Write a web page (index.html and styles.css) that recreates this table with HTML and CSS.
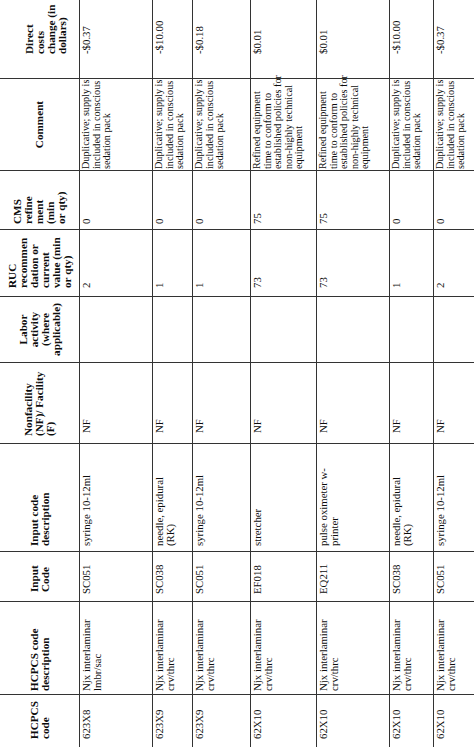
FILE: index.html
```html
<!DOCTYPE html>
<html lang="en">
<head>
<meta charset="utf-8">
<title>Direct cost refinements</title>
<link rel="stylesheet" href="styles.css">
</head>
<body>
<div class="sheet">
<table class="grid">
<colgroup>
<col class="c1"><col class="c2"><col class="c3"><col class="c4"><col class="c5">
<col class="c6"><col class="c7"><col class="c8"><col class="c9"><col class="c10">
</colgroup>
<thead>
<tr class="rh">
<th>HCPCS<br>code</th>
<th>HCPCS code<br>description</th>
<th>Input<br>Code</th>
<th>Input code<br>description</th>
<th>Nonfacility<br>(NF)/ Facility<br>(F)</th>
<th>Labor<br>activity<br>(where<br>applicable)</th>
<th>RUC<br>recommen<br>dation or<br>current<br>value (min<br>or qty)</th>
<th>CMS<br>refine<br>ment<br>(min<br>or qty)</th>
<th>Comment</th>
<th>Direct<br>costs<br>change (in<br>dollars)</th>
</tr>
</thead>
<tbody>
<tr class="r1">
<td>623X8</td><td>Njx interlaminar<br>lmbr/sac</td><td>SC051</td><td>syringe 10-12ml</td><td>NF</td><td></td><td>2</td><td>0</td>
<td>Duplicative; supply is<br>included in conscious<br>sedation pack</td><td>-$0.37</td>
</tr>
<tr class="r2">
<td>623X9</td><td>Njx interlaminar<br>crv/thrc</td><td>SC038</td><td>needle, epidural<br>(RK)</td><td>NF</td><td></td><td>1</td><td>0</td>
<td>Duplicative; supply is<br>included in conscious<br>sedation pack</td><td>-$10.00</td>
</tr>
<tr class="r3">
<td>623X9</td><td>Njx interlaminar<br>crv/thrc</td><td>SC051</td><td>syringe 10-12ml</td><td>NF</td><td></td><td>1</td><td>0</td>
<td>Duplicative; supply is<br>included in conscious<br>sedation pack</td><td>-$0.18</td>
</tr>
<tr class="r4">
<td>62X10</td><td>Njx interlaminar<br>crv/thrc</td><td>EF018</td><td>stretcher</td><td>NF</td><td></td><td>73</td><td>75</td>
<td>Refined equipment<br>time to conform to<br>established policies for<br>non-highly technical<br>equipment</td><td>$0.01</td>
</tr>
<tr class="r5">
<td>62X10</td><td>Njx interlaminar<br>crv/thrc</td><td>EQ211</td><td>pulse oximeter w-<br>printer</td><td>NF</td><td></td><td>73</td><td>75</td>
<td>Refined equipment<br>time to conform to<br>established policies for<br>non-highly technical<br>equipment</td><td>$0.01</td>
</tr>
<tr class="r6">
<td>62X10</td><td>Njx interlaminar<br>crv/thrc</td><td>SC038</td><td>needle, epidural<br>(RK)</td><td>NF</td><td></td><td>1</td><td>0</td>
<td>Duplicative; supply is<br>included in conscious<br>sedation pack</td><td>-$10.00</td>
</tr>
<tr class="r7">
<td>62X10</td><td>Njx interlaminar<br>crv/thrc</td><td>SC051</td><td>syringe 10-12ml</td><td>NF</td><td></td><td>2</td><td>0</td>
<td>Duplicative; supply is<br>included in conscious<br>sedation pack</td><td>-$0.37</td>
</tr>
</tbody>
</table>
</div>
</body>
</html>
```
FILE: styles.css
```css
* { box-sizing: border-box; }
html, body { margin: 0; padding: 0; background: #fff; }
body { width: 474px; height: 747px; overflow: hidden; }

.sheet {
  width: 762px;
  transform-origin: 0 0;
  transform: translate(-1px, 749px) rotate(-90deg);
}

.grid {
  border-collapse: collapse;
  table-layout: fixed;
  width: 762px;
  font-family: "Liberation Serif", "Times New Roman", serif;
  color: #0d0d0d;
}

.c1 { width: 54px; }
.c2 { width: 93px; }
.c3 { width: 50px; }
.c4 { width: 108px; }
.c5 { width: 81px; }
.c6 { width: 66px; }
.c7 { width: 67px; }
.c8 { width: 59px; }
.c9 { width: 92px; }
.c10 { width: 92px; }

.grid th, .grid td {
  border: 1px solid #333;
  padding: 1px 0 0 4px;
  white-space: nowrap;
  overflow: visible;
  text-align: left;
  vertical-align: top;
}

.grid td {
  font-size: 10.8px;
  line-height: 10.5px;
}

.grid th {
  font-weight: bold;
  font-size: 11.2px;
  line-height: 11px;
  vertical-align: middle;
  padding-top: 0;
}

.rh { height: 80px; }
.r1 { height: 73px; }
.r2 { height: 40px; }
.r3 { height: 58px; }
.r4 { height: 66px; }
.r5 { height: 73px; }
.r6 { height: 44px; }
.r7 { height: 44px; }

.grid th:nth-child(1), .grid td:nth-child(1) { padding-left: 9px; }
.grid th:nth-child(2), .grid td:nth-child(2) { padding-left: 3px; }
.grid th:nth-child(3) { padding-left: 9px; }
.grid td:nth-child(3) { padding-left: 7px; }
.grid th:nth-child(4), .grid td:nth-child(4) { padding-left: 5px; }
.grid th:nth-child(5) { padding-left: 7px; }
.grid td:nth-child(5) { padding-left: 10px; }
.grid th:nth-child(6) { text-align: center; padding-left: 0; }
.grid th:nth-child(7), .grid td:nth-child(7) { padding-left: 8px; }
.grid th:nth-child(8), .grid td:nth-child(8) { padding-left: 5px; }
.grid th:nth-child(9) { text-align: center; padding-left: 0; }
.grid td:nth-child(9) { padding-left: 1px; font-size: 10.2px; }
.grid th:nth-child(10), .grid td:nth-child(10) { padding-left: 24px; }
.grid th:nth-child(10) { padding-top: 12px; }
```
